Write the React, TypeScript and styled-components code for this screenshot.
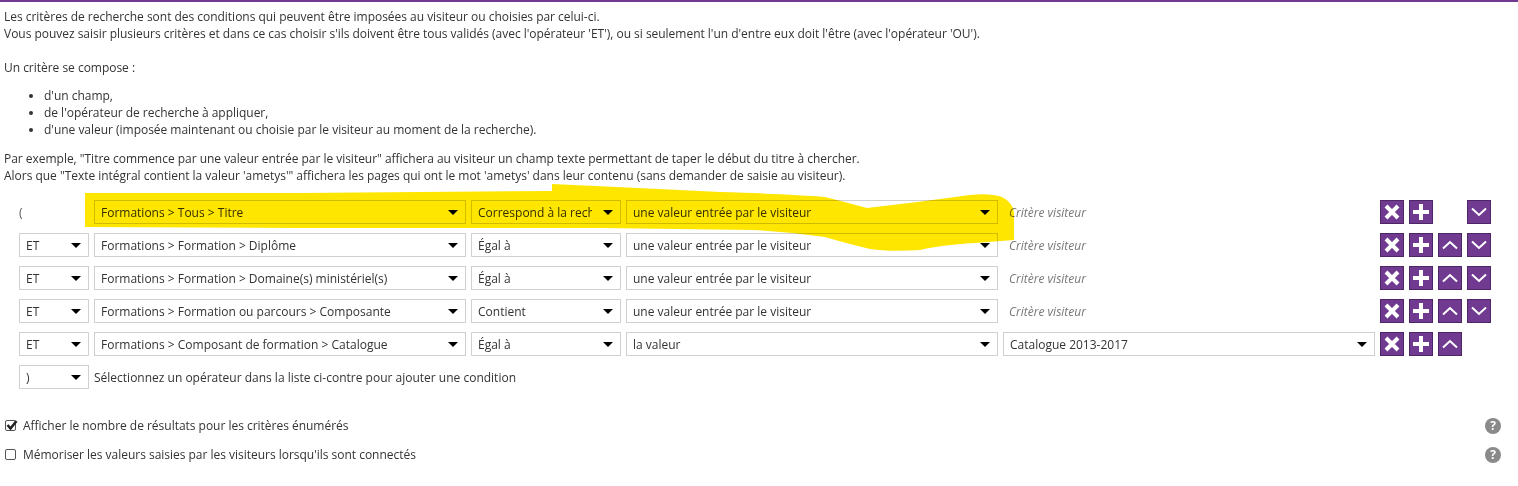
import React from "react";
import styled, { createGlobalStyle } from "styled-components";

const Global = createGlobalStyle`
  html, body { margin: 0; padding: 0; background: #fff; }
  body { font-family: "Open Sans", "Liberation Sans", sans-serif; font-size: 12px; line-height: 17px; color: #333; }
`;

const Page = styled.div`
  position: relative;
  width: 1518px;
  height: 486px;
  overflow: hidden;
  border-top: 2px solid #6f3a8f;
  box-sizing: border-box;
`;

const Intro = styled.div`
  padding: 6px 0 0 4px;
  letter-spacing: -0.025px;
  p { margin: 0; }
`;

const Lead = styled.p`
  && { margin-top: 17px; }
`;

const Example = styled.p`
  && { margin-top: 12px; }
`;

const Bullets = styled.ul`
  margin: 11px 0 0;
  padding: 0 0 0 40px;
`;

const Rows = styled.div`
  display: flex;
  flex-direction: column;
  gap: 9px;
  margin: 16px 0 0 19px;
`;

const Row = styled.div`
  display: flex;
  align-items: center;
  gap: 5px;
  height: 24px;
`;

const Select = styled.div<{ $w: number }>`
  flex: none;
  box-sizing: border-box;
  width: ${(p) => p.$w}px;
  height: 24px;
  border: 1px solid #d0d0d0;
  background: #fff;
  display: flex;
  align-items: center;
  padding: 0 6px;
  position: relative;
`;

const SelectText = styled.span`
  white-space: nowrap;
  overflow: hidden;
  flex: 1;
  margin-right: 22px;
`;

const Caret = styled.i`
  position: absolute;
  right: 7px;
  top: 9px;
  width: 0;
  height: 0;
  border-left: 5px solid transparent;
  border-right: 5px solid transparent;
  border-top: 5px solid #000;
`;

const Paren = styled.div`
  width: 70px;
  flex: none;
  color: #555;
`;

const Hint = styled.div`
  width: 372px;
  flex: none;
  padding-left: 6px;
  box-sizing: border-box;
  font-style: italic;
  color: #777;
  white-space: nowrap;
`;

const Actions = styled.div`
  display: flex;
  gap: 5px;
  flex: none;
`;

const Btn = styled.button<{ $hidden?: boolean }>`
  width: 24px;
  height: 24px;
  padding: 0;
  box-sizing: border-box;
  border: 1px solid #4e2666;
  background: #6f3a8f;
  display: flex;
  align-items: center;
  justify-content: center;
  visibility: ${(p) => (p.$hidden ? "hidden" : "visible")};
`;

const AddText = styled.span`
  white-space: nowrap;
`;

const Options = styled.div`
  display: flex;
  flex-direction: column;
  gap: 12px;
  margin: 28px 17px 0 5px;
`;

const Option = styled.div`
  display: flex;
  align-items: center;
  height: 17px;
`;

const Box = styled.span`
  flex: none;
  width: 11px;
  height: 11px;
  box-sizing: border-box;
  border: 1px solid #555;
  border-radius: 2px;
  margin-right: 7px;
  position: relative;
  background: #fff;
`;

const Check = styled.svg`
  position: absolute;
  left: -1px;
  top: -3px;
`;

const Label = styled.span`
  flex: 1;
  letter-spacing: -0.02px;
`;

const Help = styled.span`
  flex: none;
  width: 16px;
  height: 16px;
  border-radius: 50%;
  background: #8a8a8a;
  color: #fff;
  font-weight: 700;
  font-size: 12px;
  line-height: 16px;
  text-align: center;
`;

const Highlight = styled.svg`
  position: absolute;
  left: 0;
  top: -2px;
  mix-blend-mode: multiply;
  pointer-events: none;
`;

const IconX = () => (
  <svg width="20" height="20" viewBox="0 0 20 20"><path d="M4 4l12 12M16 4L4 16" stroke="#fff" strokeWidth="4" /></svg>
);
const IconPlus = () => (
  <svg width="20" height="20" viewBox="0 0 20 20"><path d="M10 2v16M2 10h16" stroke="#fff" strokeWidth="4" /></svg>
);
const IconUp = () => (
  <svg width="20" height="20" viewBox="0 0 20 20"><path d="M3 13.5L10 7l7 6.5" fill="none" stroke="#fff" strokeWidth="2" /></svg>
);
const IconDown = () => (
  <svg width="20" height="20" viewBox="0 0 20 20"><path d="M3 6.5L10 13l7-6.5" fill="none" stroke="#fff" strokeWidth="2" /></svg>
);

const Sel = ({ w, children }: { w: number; children: React.ReactNode }) => (
  <Select $w={w}>
    <SelectText>{children}</SelectText>
    <Caret />
  </Select>
);

const criteria = [
  { lead: "(", field: "Formations > Tous > Titre", op: "Correspond à la recherche", up: false, down: true },
  { lead: "ET", field: "Formations > Formation > Diplôme", op: "Égal à", up: true, down: true },
  { lead: "ET", field: "Formations > Formation > Domaine(s) ministériel(s)", op: "Égal à", up: true, down: true },
  { lead: "ET", field: "Formations > Formation ou parcours > Composante", op: "Contient", up: true, down: true },
];

export default function App() {
  return (
    <Page>
      <Global />
      <Intro>
        <p>Les critères de recherche sont des conditions qui peuvent être imposées au visiteur ou choisies par celui-ci.</p>
        <p>Vous pouvez saisir plusieurs critères et dans ce cas choisir s'ils doivent être tous validés (avec l'opérateur 'ET'), ou si seulement l'un d'entre eux doit l'être (avec l'opérateur 'OU').</p>
        <Lead>Un critère se compose :</Lead>
        <Bullets>
          <li>d'un champ,</li>
          <li>de l'opérateur de recherche à appliquer,</li>
          <li>d'une valeur (imposée maintenant ou choisie par le visiteur au moment de la recherche).</li>
        </Bullets>
        <Example>Par exemple, "Titre commence par une valeur entrée par le visiteur" affichera au visiteur un champ texte permettant de taper le début du titre à chercher.</Example>
        <p>Alors que "Texte intégral contient la valeur 'ametys'" affichera les pages qui ont le mot 'ametys' dans leur contenu (sans demander de saisie au visiteur).</p>
      </Intro>
      <Rows>
        {criteria.map((c, i) => (
          <Row key={i}>
            {c.lead === "(" ? <Paren>(</Paren> : <Sel w={70}>{c.lead}</Sel>}
            <Sel w={372}>{c.field}</Sel>
            <Sel w={150}>{c.op}</Sel>
            <Sel w={372}>une valeur entrée par le visiteur</Sel>
            <Hint>Critère visiteur</Hint>
            <Actions>
              <Btn><IconX /></Btn>
              <Btn><IconPlus /></Btn>
              <Btn $hidden={!c.up}><IconUp /></Btn>
              <Btn $hidden={!c.down}><IconDown /></Btn>
            </Actions>
          </Row>
        ))}
        <Row>
          <Sel w={70}>ET</Sel>
          <Sel w={372}>{"Formations > Composant de formation > Catalogue"}</Sel>
          <Sel w={150}>Égal à</Sel>
          <Sel w={372}>la valeur</Sel>
          <Sel w={372}>Catalogue 2013-2017</Sel>
          <Actions>
            <Btn><IconX /></Btn>
            <Btn><IconPlus /></Btn>
            <Btn><IconUp /></Btn>
          </Actions>
        </Row>
        <Row>
          <Sel w={70}>)</Sel>
          <AddText>Sélectionnez un opérateur dans la liste ci-contre pour ajouter une condition</AddText>
        </Row>
      </Rows>
      <Options>
        <Option>
          <Box>
            <Check width="14" height="14" viewBox="0 0 14 14"><path d="M2.5 7l3 3.5L11.5 3" fill="none" stroke="#222" strokeWidth="2.6" /></Check>
          </Box>
          <Label>Afficher le nombre de résultats pour les critères énumérés</Label>
          <Help>?</Help>
        </Option>
        <Option>
          <Box />
          <Label>Mémoriser les valeurs saisies par les visiteurs lorsqu'ils sont connectés</Label>
          <Help>?</Help>
        </Option>
      </Options>
      <Highlight width="1518" height="486" viewBox="0 0 1518 486">
        <path
          fill="#ffe600"
          d="M85 193 L300 193 L552 191 L552 184 Q640 188 720 192 Q790 194 825 197 Q845 202 867 208 Q920 202 970 195 Q990 193 1002 197 Q1014 203 1014 214 L1014 240 L975 243 Q940 245 920 250 Q890 252 870 249 Q845 243 825 237 Q790 232 753 230 L600 228 L300 228 L85 227 Z"
        />
      </Highlight>
    </Page>
  );
}
